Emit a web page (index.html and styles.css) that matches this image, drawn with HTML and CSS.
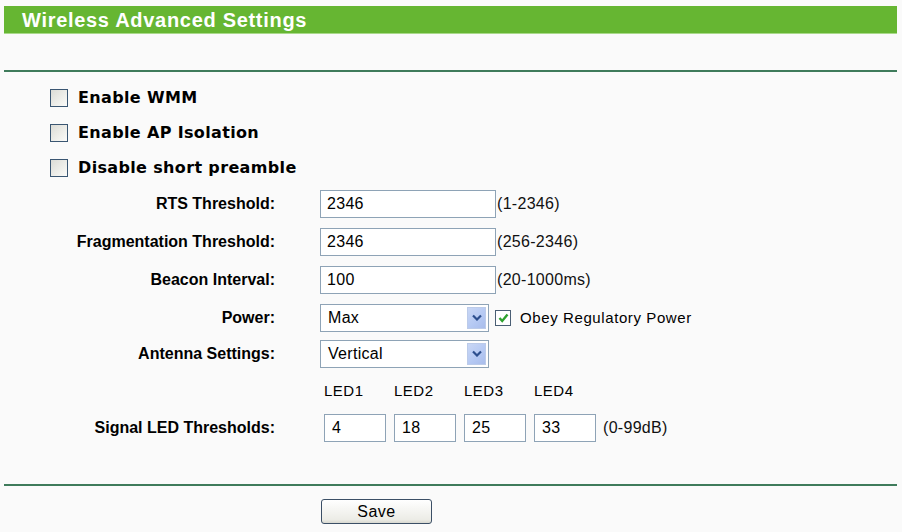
FILE: index.html
```html
<!DOCTYPE html>
<html>
<head>
<meta charset="utf-8">
<title>Wireless Advanced Settings</title>
<link rel="stylesheet" href="styles.css">
</head>
<body>
<div class="header">Wireless Advanced Settings</div>
<div class="rule rule-top"></div>

<div class="checks">
  <label class="check-row"><span class="cb"></span>Enable WMM</label>
  <label class="check-row"><span class="cb"></span>Enable AP Isolation</label>
  <label class="check-row"><span class="cb"></span>Disable short preamble</label>
</div>

<div class="form">
  <div class="lbl">RTS Threshold:</div>
  <div class="ctl"><div class="input wide">2346</div><span class="hint">(1-2346)</span></div>

  <div class="lbl">Fragmentation Threshold:</div>
  <div class="ctl"><div class="input wide">2346</div><span class="hint">(256-2346)</span></div>

  <div class="lbl">Beacon Interval:</div>
  <div class="ctl"><div class="input wide">100</div><span class="hint">(20-1000ms)</span></div>

  <div class="lbl">Power:</div>
  <div class="ctl">
    <div class="select"><span class="sel-val">Max</span><span class="sel-btn"><svg width="10" height="7" viewBox="0 0 10 7"><path d="M1 1.5 L5 5.5 L9 1.5" fill="none" stroke="#2d4f8e" stroke-width="2.2"/></svg></span></div>
    <span class="cb small checked"><svg width="11" height="10" viewBox="0 0 11 10"><path d="M1.5 5 L4.2 8 L9.5 1.5" fill="none" stroke="#2ea12e" stroke-width="2.4"/></svg></span>
    <span class="obey">Obey Regulatory Power</span>
  </div>

  <div class="lbl">Antenna Settings:</div>
  <div class="ctl">
    <div class="select"><span class="sel-val">Vertical</span><span class="sel-btn"><svg width="10" height="7" viewBox="0 0 10 7"><path d="M1 1.5 L5 5.5 L9 1.5" fill="none" stroke="#2d4f8e" stroke-width="2.2"/></svg></span></div>
  </div>

  <div class="lbl"></div>
  <div class="ctl led-grid">
    <span class="led-lbl">LED1</span><span class="led-lbl">LED2</span><span class="led-lbl">LED3</span><span class="led-lbl">LED4</span>
  </div>

  <div class="lbl">Signal LED Thresholds:</div>
  <div class="ctl">
    <div class="led-grid">
      <div class="input led">4</div><div class="input led">18</div><div class="input led">25</div><div class="input led">33</div>
    </div>
    <span class="hint db">(0-99dB)</span>
  </div>
</div>

<div class="rule rule-bottom"></div>
<div class="actions"><button class="btn">Save</button></div>
</body>
</html>
```
FILE: styles.css
```css
html, body {
  margin: 0;
  padding: 0;
  background: #fafafa;
  font-family: "Liberation Sans", Arial, sans-serif;
  color: #000;
}

.header {
  margin: 6px 5px 0 4px;
  height: 28px;
  line-height: 28px;
  background: #66b632;
  color: #fff;
  font-weight: bold;
  font-size: 20px;
  letter-spacing: 0.7px;
  padding-left: 18px;
  border-bottom: 1px solid #a9d98a;
  box-sizing: border-box;
}

.rule {
  height: 2px;
  background: #3f7b5b;
  margin: 0 5px 0 4px;
}
.rule-top { margin-top: 36px; }

.checks {
  margin-top: 8px;
  padding-left: 50px;
}
.check-row {
  display: flex;
  align-items: center;
  height: 35px;
  font-family: "DejaVu Sans", Verdana, sans-serif;
  font-weight: bold;
  font-size: 16px;
  letter-spacing: 0.35px;
}

.cb {
  display: inline-flex;
  align-items: center;
  justify-content: center;
  width: 18px;
  height: 18px;
  box-sizing: border-box;
  border: 1px solid #3a5672;
  background: linear-gradient(135deg, #dcdcd6 0%, #f2f2ee 70%, #fbfbfa 100%);
  margin-right: 10px;
}
.cb.small {
  width: 16px;
  height: 16px;
  margin: 0 9px 0 6px;
  background: #fff;
  border-color: #4a5e74;
}

.form {
  display: grid;
  grid-template-columns: 275px 1fr;
  grid-template-rows: 38px 38px 38px 37px 35px 38px 38px;
  column-gap: 45px;
}
.lbl {
  display: flex;
  align-items: center;
  justify-content: flex-end;
  font-weight: bold;
  font-size: 16px;
}
.ctl {
  display: flex;
  align-items: center;
  font-size: 15px;
}

.input {
  height: 28px;
  box-sizing: border-box;
  border: 1px solid #8ea3b6;
  background: #fff;
  font-size: 16px;
  letter-spacing: 0.3px;
  display: flex;
  align-items: center;
  padding-left: 6px;
}
.input.wide { width: 176px; }
.input.led { width: 62px; padding-left: 7px; }

.hint {
  margin-left: 1px;
  font-size: 16px;
  letter-spacing: 0.3px;
  color: #111;
}
.hint.db { margin-left: 7px; }

.select {
  width: 169px;
  height: 28px;
  box-sizing: border-box;
  border: 1px solid #8ea3b6;
  background: #fff;
  display: flex;
  align-items: center;
  padding: 2px;
}
.sel-val {
  flex: 1;
  padding-left: 5px;
  font-size: 16px;
  letter-spacing: 0.3px;
}
.sel-btn {
  width: 19px;
  height: 22px;
  display: flex;
  align-items: center;
  justify-content: center;
  background: linear-gradient(135deg, #c9d7f5 0%, #b4c8f3 60%, #a9bdeb 100%);
  border: 1px solid #bccbe9;
  box-sizing: border-box;
}

.obey { font-size: 15px; letter-spacing: 0.6px; }

.led-grid {
  display: grid;
  grid-template-columns: repeat(4, 62px);
  column-gap: 8px;
  padding-left: 4px;
}
.led-lbl { font-size: 15px; letter-spacing: 0.5px; }

.rule-bottom { margin-top: 37px; }

.actions {
  display: flex;
  padding-left: 321px;
  margin-top: 13px;
}
.btn {
  width: 111px;
  height: 25px;
  border: 1px solid #3b4f66;
  border-radius: 3px;
  background: linear-gradient(#ffffff, #ecece6 85%, #d8d8d0);
  font-family: "Liberation Sans", Arial, sans-serif;
  font-size: 16px;
  color: #000;
  padding: 0;
  letter-spacing: 0.5px;
}
```
